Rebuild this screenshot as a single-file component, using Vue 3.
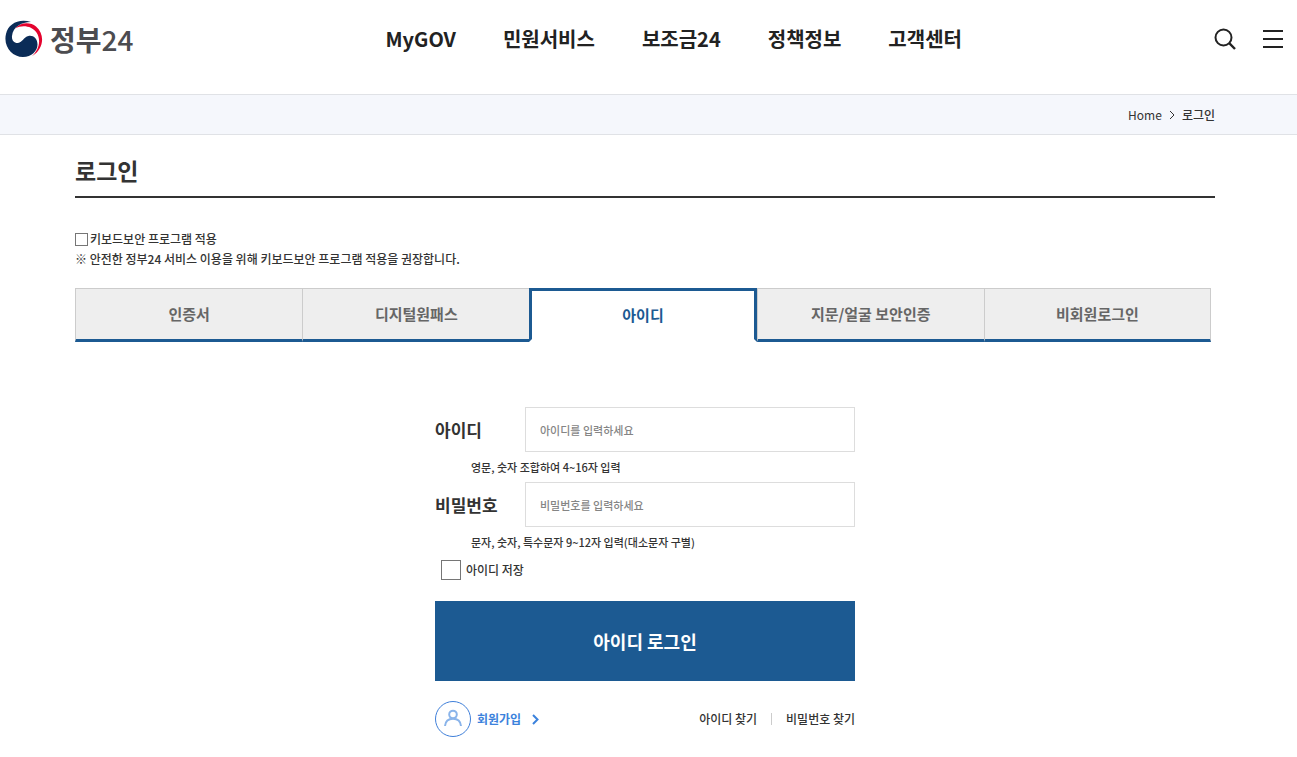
<script setup>
import { ref } from 'vue'

const menu = ['MyGOV', '민원서비스', '보조금24', '정책정보', '고객센터']
const tabs = ['인증서', '디지털원패스', '아이디', '지문/얼굴 보안인증', '비회원로그인']
const activeTab = ref(2)
const secureKeyboard = ref(false)
const userId = ref('')
const password = ref('')
const saveId = ref(false)
</script>

<template>
  <div class="page">
    <header class="header">
      <a class="logo" href="#" aria-label="정부24">
        <svg class="emblem" viewBox="0 0 38 38" aria-hidden="true">
          <path fill="#e4032e" d="M10 8.500 C15 2.500 25 1.500 31 6.500 C40 14 39.500 29 26.500 36.500 C34 30 36.500 20 31.500 12.500 C26.500 5.500 17 4.500 10 8.500Z" />
          <path fill="#0b2c57" d="M26 2 C14-2 3 4 1 14 C-2 26 7 37 18 37 C26.500 37 32.500 31 32.500 24.500 C32.500 18.500 28 15 23.500 16 C18.500 17 17.500 22.500 13 23 C9 23.300 6.500 20 7 16 C8 7 16 2 26 2Z" />
        </svg>
        <span class="logo-name">정부</span><span class="logo-number">24</span>
      </a>
      <nav class="menu" aria-label="주 메뉴">
        <a v-for="item in menu" :key="item" href="#">{{ item }}</a>
      </nav>
      <div class="tools">
        <button type="button" aria-label="검색">
          <svg width="22" height="22" viewBox="0 0 22 22" fill="none" stroke="#222" stroke-width="2">
            <circle cx="9.500" cy="9.500" r="8" />
            <path d="M15.200 15.200 L21 21" stroke-width="2.400" />
          </svg>
        </button>
        <button type="button" aria-label="전체메뉴">
          <svg width="20" height="20" viewBox="0 0 20 20" stroke="#222" stroke-width="2">
            <path d="M0 2H20M0 10H20M0 18H20" />
          </svg>
        </button>
      </div>
    </header>

    <nav class="breadcrumb" aria-label="현재 위치">
      <a class="home" href="#">Home</a>
      <svg width="6" height="10" viewBox="0 0 6 10" fill="none" stroke="#333" aria-hidden="true">
        <path d="M1 1L5 5L1 9" />
      </svg>
      <span>로그인</span>
    </nav>

    <main class="content">
      <h1>로그인</h1>

      <div class="security">
        <label><input v-model="secureKeyboard" type="checkbox" />키보드보안 프로그램 적용</label>
        <p>※ 안전한 정부24 서비스 이용을 위해 키보드보안 프로그램 적용을 권장합니다.</p>
      </div>

      <div class="tabs" role="tablist">
        <button
          v-for="(tab, i) in tabs"
          :key="tab"
          type="button"
          role="tab"
          :aria-selected="activeTab === i"
          :class="{ active: activeTab === i }"
          @click="activeTab = i"
        >{{ tab }}</button>
      </div>

      <form class="login" @submit.prevent>
        <div class="field">
          <label for="user-id">아이디</label>
          <input id="user-id" v-model="userId" type="text" placeholder="아이디를 입력하세요" />
        </div>
        <p class="hint">영문, 숫자 조합하여 4~16자 입력</p>
        <div class="field">
          <label for="user-pw">비밀번호</label>
          <input id="user-pw" v-model="password" type="password" placeholder="비밀번호를 입력하세요" />
        </div>
        <p class="hint">문자, 숫자, 특수문자 9~12자 입력(대소문자 구별)</p>
        <label class="save"><input v-model="saveId" type="checkbox" />아이디 저장</label>
        <button class="submit" type="submit">아이디 로그인</button>
        <div class="links">
          <a class="join" href="#">
            <svg width="36" height="36" viewBox="0 0 36 36" fill="none" aria-hidden="true">
              <circle cx="18" cy="18" r="17.500" stroke="#3f7fd9" />
              <g stroke="#8ab4ea" stroke-width="2">
                <circle cx="18" cy="13.500" r="3.800" />
                <path d="M10 25C10.500 20 14 17.800 18 17.800C22 17.800 25.500 20 26 25" />
              </g>
            </svg>
            <span>회원가입</span>
            <svg class="arrow" width="7" height="11" viewBox="0 0 7 11" fill="none" stroke="#3b82dc" stroke-width="2" aria-hidden="true">
              <path d="M1 1L5.500 5.500L1 10" />
            </svg>
          </a>
          <div class="find">
            <a href="#">아이디 찾기</a>
            <a href="#">비밀번호 찾기</a>
          </div>
        </div>
      </form>
    </main>
  </div>
</template>

<style>
body {
  background: #fff;
}
</style>

<style scoped>
.page {
  color: #333;
  font-family: "Noto Sans CJK KR", "Noto Sans", sans-serif;
  font-size: 12px;
  font-weight: 500;
  line-height: 20px;
}

.page *,
.page {
  box-sizing: border-box;
}

a {
  color: inherit;
  text-decoration: none;
}

button,
input {
  font: inherit;
  color: inherit;
}

button {
  padding: 0;
  border: 0;
  background: none;
  cursor: pointer;
}

p,
h1 {
  margin: 0;
}

input[type="checkbox"] {
  appearance: none;
  margin: 0;
  border: 1px solid #767676;
  background: #fff;
}

input[type="checkbox"]:checked {
  background: #1c5a92;
}

.header {
  display: flex;
  align-items: center;
  justify-content: space-between;
  min-height: 94px;
  padding: 0 14px 16px 5px;
}

.logo {
  display: flex;
  align-items: center;
  color: #4c4c50;
  font-size: 28px;
  line-height: 36px;
}

.emblem {
  width: 38px;
  height: 38px;
  margin-right: 7px;
}

.logo-name {
  font-weight: 700;
}

.logo-number {
  font-weight: 500;
}

.menu {
  display: flex;
  gap: 47px;
  color: #222;
  font-size: 20px;
  font-weight: 700;
  line-height: 30px;
}

.tools {
  display: flex;
  align-items: center;
  gap: 27px;
}

.tools svg {
  display: block;
}

.breadcrumb {
  display: flex;
  align-items: center;
  justify-content: flex-end;
  gap: 7px;
  min-height: 41px;
  padding: 0 82px 0 75px;
  border-top: 1px solid #e0e2e6;
  border-bottom: 1px solid #e0e2e6;
  background: #f5f7fc;
}

.home {
  font-weight: 400;
}

.content {
  padding: 16px 82px 20px 75px;
}

h1 {
  padding-bottom: 7px;
  border-bottom: 2px solid #333;
  font-size: 23px;
  font-weight: 700;
  line-height: 38px;
}

.security {
  padding: 31px 0 19px;
}

.security label {
  display: flex;
  align-items: center;
  gap: 2px;
}

.security input {
  width: 13px;
  height: 13px;
}

.tabs {
  display: grid;
  grid-template-columns: repeat(5, 1fr);
  margin-right: 4px;
}

.tabs button {
  height: 54px;
  border: solid #ccc;
  border-width: 1px 0 3px 1px;
  border-bottom-color: #1c5a92;
  background: #eee;
  color: #666;
  font-size: 15px;
  font-weight: 700;
}

.tabs button:last-child {
  border-right-width: 1px;
}

.tabs .active {
  border: 3px solid #1c5a92;
  border-bottom-color: #fff;
  background: #fff;
  color: #1c5a92;
}

.login {
  max-width: 420px;
  margin: 65px auto 0;
}

.field {
  display: flex;
  align-items: center;
}

.field label {
  flex: 0 0 90px;
  font-size: 17px;
  font-weight: 700;
}

.field input {
  flex: 1;
  min-width: 0;
  height: 45px;
  padding: 0 14px;
  border: 1px solid #ddd;
  background: #fff;
  font-size: 11px;
}

.field input::placeholder {
  color: #858585;
  opacity: 1;
}

.hint {
  padding-left: 36px;
  font-size: 11px;
  line-height: 30px;
}

.save {
  display: flex;
  align-items: center;
  gap: 5px;
  margin: 3px 0 21px 6px;
}

.save input {
  width: 20px;
  height: 20px;
}

.submit {
  display: block;
  width: 100%;
  height: 80px;
  background: #1c5a92;
  color: #fff;
  font-size: 18px;
  font-weight: 700;
}

.links {
  display: flex;
  align-items: center;
  justify-content: space-between;
  margin-top: 20px;
}

.join {
  display: flex;
  align-items: center;
  gap: 6px;
  color: #3b82dc;
  font-weight: 700;
}

.arrow {
  margin-left: 5px;
}

.find {
  display: flex;
  align-items: center;
}

.find a + a {
  display: flex;
  align-items: center;
}

.find a + a::before {
  width: 1px;
  height: 12px;
  margin: 0 14px;
  background: #ccc;
  content: "";
}
</style>
